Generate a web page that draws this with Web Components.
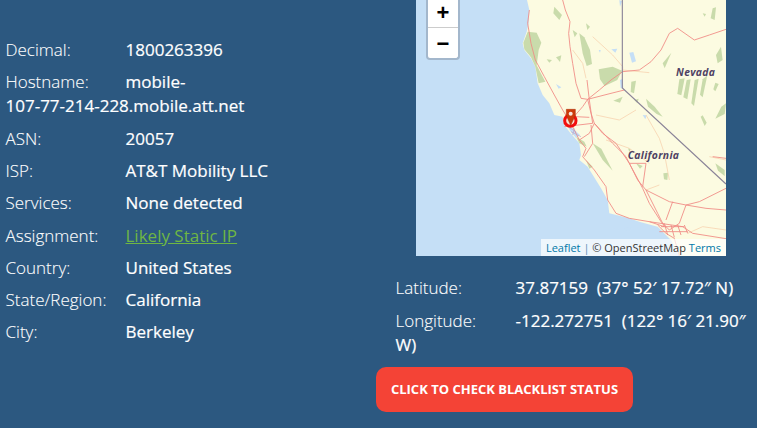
<!DOCTYPE html>
<html>
<head>
<meta charset="utf-8">
<style>
  html, body { margin: 0; padding: 0; height: 428px; overflow: hidden; background: #2c5880; }
  body { font-family: "Open Sans", sans-serif; color: #fff; }
  ip-page { width: 757px; height: 428px; }
</style>
</head>
<body>
<ip-page>
  <div slot="left">
    <ip-row label="Decimal:">1800263396</ip-row>
    <ip-row label="Hostname:">mobile-<wbr><span style="white-space:nowrap">107-77-214-228.mobile.att.net</span></ip-row>
    <ip-row label="ASN:">20057</ip-row>
    <ip-row label="ISP:">AT&amp;T Mobility LLC</ip-row>
    <ip-row label="Services:">None detected</ip-row>
    <ip-row label="Assignment:"><a href="#" style="color:#6fb644;-webkit-text-stroke:0">Likely Static IP</a></ip-row>
    <ip-row label="Country:">United States</ip-row>
    <ip-row label="State/Region:">California</ip-row>
    <ip-row label="City:">Berkeley</ip-row>
  </div>
  <geo-map slot="map"></geo-map>
  <div slot="coords">
    <ip-row label="Latitude:">37.87159&nbsp; (37° 52′ 17.72″ N)</ip-row>
    <ip-row label="Longitude:">-122.272751&nbsp; (122° 16′ 21.90″ W)</ip-row>
  </div>
  <red-button slot="action">Click to check blacklist status</red-button>
</ip-page>

<script>
class IpPage extends HTMLElement {
  constructor() {
    super();
    this.attachShadow({ mode: 'open' });
    this.shadowRoot.innerHTML = `
      <style>
        :host { display: grid; grid-template-columns: 376px 381px; box-sizing: border-box; }
        .left { padding: 38.05px 0 0 5.5px; width: 270px; }
        .right { display: flex; flex-direction: column; align-items: flex-start; }
        .map { margin-left: 40px; height: 256px; }
        .coords { padding: 20.4px 0 0 19.5px; width: 381px; box-sizing: border-box; }
        .action { margin-top: 10.3px; }
      </style>
      <div class="left"><slot name="left"></slot></div>
      <div class="right">
        <div class="map"><slot name="map"></slot></div>
        <div class="coords"><slot name="coords"></slot></div>
        <div class="action"><slot name="action"></slot></div>
      </div>`;
  }
}
customElements.define('ip-page', IpPage);

class IpRow extends HTMLElement {
  constructor() {
    super();
    this.attachShadow({ mode: 'open' });
    this.shadowRoot.innerHTML = `
      <style>
        :host { display: block; font-size: 17px; line-height: 24px; margin-bottom: 8.3px; font-family: "Open Sans", sans-serif; color: #fff; }
        :host(:last-child) { margin-bottom: 0; }
        .label { display: inline-block; width: 120px; font-weight: 300; -webkit-text-stroke: .1px #fff; }
        .val { font-weight: 400; -webkit-text-stroke: .2px #fff; }
      </style>
      <span class="label"></span><span class="val"><slot></slot></span>`;
  }
  connectedCallback() {
    this.shadowRoot.querySelector('.label').textContent = this.getAttribute('label');
  }
}
customElements.define('ip-row', IpRow);

class RedButton extends HTMLElement {
  constructor() {
    super();
    this.attachShadow({ mode: 'open' });
    this.shadowRoot.innerHTML = `
      <style>
        :host { display: inline-block; background: #f44336; border-radius: 10px; color: #fff;
          font: 700 13px/45px "Open Sans", sans-serif; text-transform: uppercase; height: 45px; width: 257px; text-align: center; white-space: nowrap; }
      </style>
      <slot></slot>`;
  }
}
customElements.define('red-button', RedButton);

// coordinates below are 3x, read off a zoomed crop of the map
class GeoMap extends HTMLElement {
  constructor() {
    super();
    this.attachShadow({ mode: 'open' });
    this.shadowRoot.innerHTML = `
      <style>
        :host { display: block; position: relative; width: 310px; height: 256px; overflow: hidden; background: #c5dff6; font-family: "Open Sans", sans-serif; }
        svg { display: block; }
        .zoom { position: absolute; left: 10px; top: -3px; width: 30px; border-radius: 4px; background: #fff; border: 2px solid #a3b7cc; border-top: 0; }
        .zoom div { height: 30px; text-align: center; font: 700 22px/32px "Liberation Sans", sans-serif; color: #000; }
        .zoom div + div { border-top: 1px solid #ccc; }
        .attr { position: absolute; right: 0; bottom: 0; background: rgba(255,255,255,.7); font: 400 11px/17px "Open Sans", sans-serif; color: #333; padding: 0 5px; white-space: nowrap; }
        .attr a { color: #0078a8; text-decoration: none; }
      </style>
      <svg width="310" height="256" viewBox="0 0 930 768">
        <defs><filter id="soft" x="0" y="0" width="100%" height="100%"><feGaussianBlur stdDeviation="1.1"/></filter></defs>
        <g filter="url(#soft)">
        <path fill="#fcfbe1" d="M333 0 L340 30 L338 70 L332 95 L320 130 L325 150 L345 175 L358 200 L365 250 L380 285 L400 310 L415 345 L440 350 L445 375 L460 395 L490 430 L495 465 L490 480 L515 500 L555 565 L575 600 L580 640 L640 655 L670 665 L725 680 L765 720 L790 768 L930 768 L930 0 Z"/>
        <g fill="#c9dbab">
          <path d="M335 95 L362 98 L376 128 L368 150 L362 196 L388 245 L368 250 L358 200 L345 172 L325 148 L322 128 Z"/>
          <path d="M490 100 L505 112 L522 150 L528 192 L512 198 L500 160 Z"/>
          <path d="M415 20 L438 45 L430 60 L412 40 Z"/>
          <path d="M548 208 L590 200 L618 212 L604 240 L566 258 L552 238 Z"/>
          <path d="M420 172 L436 166 L432 186 Z"/><path d="M392 178 L408 180 L400 188 Z"/>
          <path d="M646 245 L660 242 L654 280 L644 276 Z"/><path d="M592 302 L620 290 L612 308 Z"/>
          <path d="M690 296 L716 320 L740 350 L722 342 L696 320 Z"/>
          <path d="M530 430 L556 446 L590 512 L560 480 Z"/>
          <path d="M660 490 L680 498 L672 506 Z"/>
          <path d="M742 520 L756 518 L754 540 L744 538 Z"/>
          <path d="M636 445 L644 448 L640 456 Z"/>
          <path d="M510 480 L530 500 L520 506 Z"/>
          <path d="M790 238 L806 235 L796 286 L784 282 Z"/>
          <path d="M812 240 L824 238 L814 298 L802 292 Z"/>
          <path d="M836 240 L848 236 L834 318 L826 310 Z"/>
          <path d="M860 238 L874 226 L860 292 L852 284 Z"/>
          <path d="M898 248 L908 252 L898 274 L892 268 Z"/>
          <path d="M916 320 L930 310 L926 342 L898 356 Z"/>
          <path d="M740 190 L766 158 L746 205 Z"/>
          <path d="M860 346 L872 368 L866 378 L854 350 Z"/>
          <path d="M890 25 L900 22 L896 60 L884 55 Z"/><path d="M860 40 L870 42 L866 50 Z"/>
          <path d="M898 490 L926 510 L926 528 L906 512 Z"/>
          <path d="M900 165 L915 140 L920 180 L905 190 Z"/>
          <path d="M480 410 L505 425 L512 440 L490 430 Z"/><path d="M655 300 L668 296 L664 310 Z"/>
          <path d="M510 70 L522 80 L514 90 Z"/><path d="M470 90 L484 100 L476 112 Z"/>
        </g>
        <g fill="#c5dff6">
          <path d="M610 0 L618 4 L612 20 Z"/>
          <path d="M612 240 L620 236 L622 266 L614 264 Z"/>
          <path d="M640 158 L652 156 L660 184 L648 188 Z"/>
          <path d="M586 148 L604 146 L598 158 Z"/>
          <path d="M420 252 L436 262 L428 266 Z"/>
          <path d="M548 150 L554 150 L552 158 Z"/>
          <path d="M680 345 L692 346 L688 358 Z"/>
          <path d="M590 685 L610 687 L604 692 Z"/><path d="M622 683 L648 681 L640 694 L628 692 Z"/>
          <path d="M452 370 L470 385 L492 405 L480 414 L462 392 Z"/>
        </g>
        <g fill="none" stroke="#f7d3b0" stroke-width="2.4">
          <path d="M470 150 L500 190 L510 235 M530 110 L590 165 L620 200 L620 215 M620 210 L700 218 M540 345 L610 360 L660 330 M570 420 L640 445 L700 490 M760 540 L745 460 L730 415 L690 345 M690 570 L730 555 M880 470 L930 480 M815 700 L860 680 L930 690"/>
        </g>
        <g fill="none" stroke="#f08a84" stroke-width="2.6" stroke-linejoin="round">
          <path d="M440 0 L448 30 L462 65 L458 100 L462 140 L470 190 L480 250 L495 295 L515 298 L525 340 L535 370 L560 400 L600 430 L640 490 L680 565 L700 610 L735 665 L760 690"/>
          <path d="M340 30 L335 70 L345 130 L358 180 L385 230 L415 285 L440 330 L465 370 L490 420 L510 445 L500 470 L535 510 L570 560 L575 600 L600 640 L640 655 L700 665 L745 680"/>
          <path d="M465 360 L500 320 L515 298 L550 270 L585 240 L620 215 L670 210 L705 185 L735 150 L760 100 L785 85 L835 120 L880 105 L930 88"/>
          <path d="M515 298 L585 280 L625 270"/>
          <path d="M535 370 L590 430 L630 470 L665 540 L690 570 L725 640 L745 680"/>
          <path d="M445 380 L530 370 L520 300 L513 240"/>
          <path d="M690 570 L760 605 L810 615 L850 605 L930 565"/>
          <path d="M810 615 L790 670 L760 690"/>
          <path d="M810 615 L870 625 L930 630"/>
          <path d="M770 605 L750 660"/>
          <path d="M700 665 L800 680 L830 700 L930 716"/>
          <path d="M490 420 L520 400 L535 370 M480 350 L520 352"/>
          <path d="M890 470 L930 475 M505 470 L530 430 L525 375"/>
          <path d="M725 675 L750 700 L775 715 L790 768 M735 680 L805 680 M730 695 L815 695 M745 670 L755 705 M765 675 L775 712 M785 675 L795 705 M805 675 L815 700"/>
          <path d="M640 490 L690 490 L680 560"/>
        </g>
        <g fill="none" stroke="#b8a8cc" stroke-width="2">
          <path d="M455 380 L480 395 M465 395 L495 410 M475 385 L470 405"/>
        </g>
        <path fill="none" stroke="#8b8498" stroke-width="3.4" d="M619 0 L619 264 L930 552"/>
        </g>
        <g fill="#4e4163" font-family="'Open Sans',sans-serif" font-size="31" font-weight="700" font-style="italic" letter-spacing="1">
          <text x="780" y="229">Nevada</text>
          <text x="635" y="476">California</text>
        </g>
        <circle cx="463" cy="362" r="17" fill="#f7d0c8" fill-opacity=".6" stroke="#f20d0d" stroke-width="9"/>
        <path fill="#cc3a0a" stroke="#a82c06" stroke-width="1.5" d="M451 328 L478 328 L478 346 L464 376 L451 346 Z"/>
        <circle cx="464" cy="341" r="6" fill="#f7e4da"/>
      </svg>
      <div class="zoom"><div>+</div><div>−</div></div>
      <div class="attr"><a href="#">Leaflet</a> <span style="color:#5a8fb4">|</span> © OpenStreetMap <a href="#">Terms</a></div>`;
  }
}
customElements.define('geo-map', GeoMap);
</script>
</body>
</html>
